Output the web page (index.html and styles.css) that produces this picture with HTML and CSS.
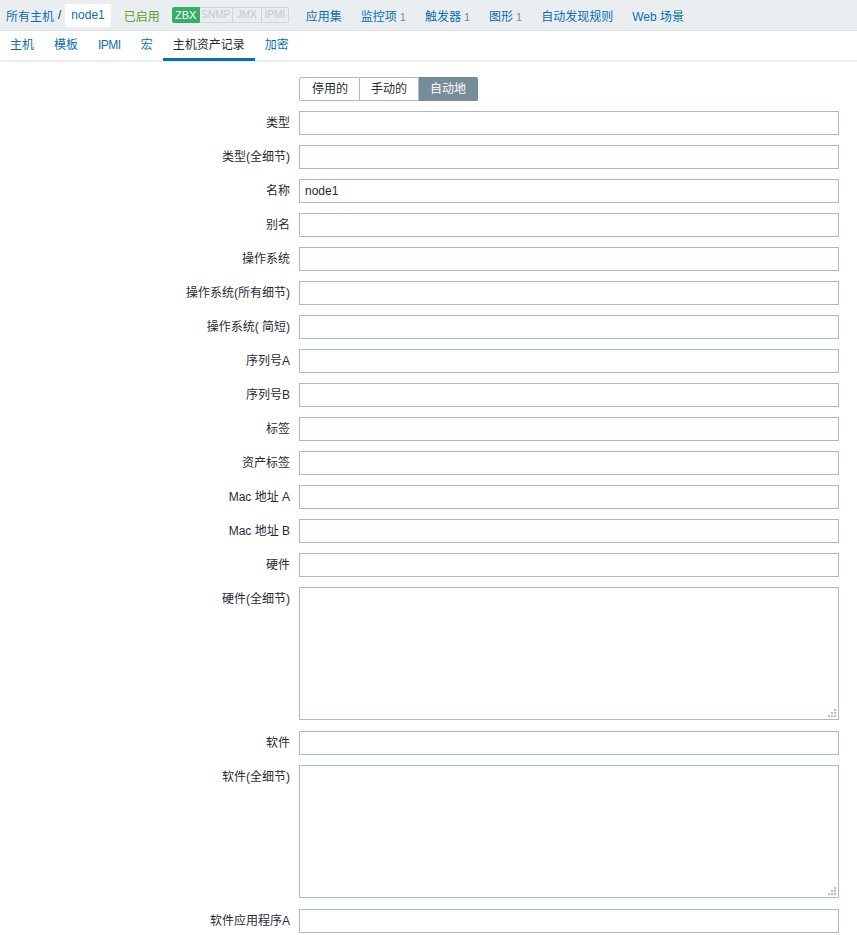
FILE: index.html
```html
<!DOCTYPE html>
<html lang="zh">
<head>
<meta charset="utf-8">
<link rel="stylesheet" href="styles.css">
</head>
<body>
<div class="topbar">
  <a class="lnk crumb">所有主机</a>
  <span class="sep">/</span>
  <span class="host">node1</span>
  <span class="status">已启用</span>
  <span class="badges"><span class="b on w1">ZBX</span><span class="b w2">SNMP</span><span class="b w3">JMX</span><span class="b w4">IPMI</span></span>
  <a class="lnk item first">应用集</a>
  <a class="lnk item">监控项<span class="cnt">1</span></a>
  <a class="lnk item">触发器<span class="cnt">1</span></a>
  <a class="lnk item">图形<span class="cnt">1</span></a>
  <a class="lnk item">自动发现规则</a>
  <a class="lnk item">Web 场景</a>
</div>
<div class="tabs">
  <a class="tab">主机</a>
  <a class="tab">模板</a>
  <a class="tab narrow">IPMI</a>
  <a class="tab">宏</a>
  <a class="tab active">主机资产记录</a>
  <a class="tab">加密</a>
</div>
<div class="form">
  <div class="lbl"></div>
  <div class="seg"><span class="sb">停用的</span><span class="sb">手动的</span><span class="sb sel">自动地</span></div>

  <div class="lbl">类型</div><input class="inp" type="text">
  <div class="lbl">类型(全细节)</div><input class="inp" type="text">
  <div class="lbl">名称</div><input class="inp" type="text" value="node1">
  <div class="lbl">别名</div><input class="inp" type="text">
  <div class="lbl">操作系统</div><input class="inp" type="text">
  <div class="lbl">操作系统(所有细节)</div><input class="inp" type="text">
  <div class="lbl">操作系统( 简短)</div><input class="inp" type="text">
  <div class="lbl">序列号A</div><input class="inp" type="text">
  <div class="lbl">序列号B</div><input class="inp" type="text">
  <div class="lbl">标签</div><input class="inp" type="text">
  <div class="lbl">资产标签</div><input class="inp" type="text">
  <div class="lbl">Mac 地址 A</div><input class="inp" type="text">
  <div class="lbl">Mac 地址 B</div><input class="inp" type="text">
  <div class="lbl">硬件</div><input class="inp" type="text">
  <div class="lbl">硬件(全细节)</div>
  <div class="taw"><textarea class="ta"></textarea><svg class="grip" width="8" height="8" viewBox="0 0 8 8"><rect x="6" y="0" width="2" height="2"/><rect x="3" y="3" width="2" height="2"/><rect x="6" y="3" width="2" height="2"/><rect x="0" y="6" width="2" height="2"/><rect x="3" y="6" width="2" height="2"/><rect x="6" y="6" width="2" height="2"/></svg></div>
  <div class="lbl">软件</div><input class="inp" type="text">
  <div class="lbl">软件(全细节)</div>
  <div class="taw"><textarea class="ta"></textarea><svg class="grip" width="8" height="8" viewBox="0 0 8 8"><rect x="6" y="0" width="2" height="2"/><rect x="3" y="3" width="2" height="2"/><rect x="6" y="3" width="2" height="2"/><rect x="0" y="6" width="2" height="2"/><rect x="3" y="6" width="2" height="2"/><rect x="6" y="6" width="2" height="2"/></svg></div>
  <div class="lbl">软件应用程序A</div><input class="inp" type="text">
</div>
</body>
</html>
```
FILE: styles.css
```css
html, body {
  margin: 0;
  padding: 0;
  background: #ffffff;
  font-family: "Liberation Sans", Arial, "Noto Sans CJK SC", sans-serif;
  font-size: 12px;
  color: #1f2c33;
}
.topbar {
  height: 30px;
  background: #ebeef0;
  border-bottom: 1px solid #dfe4e7;
  display: flex;
  align-items: center;
  padding-left: 6px;
  white-space: nowrap;
}
.lnk { color: #0a6eb4; text-decoration: none; }
.sep { margin: 0 4px 0 4px; color: #1f2c33; }
.host {
  display: inline-flex;
  align-items: center;
  background: #fff;
  height: 23px;
  padding: 0 6px;
  color: #0a6eb4;
  border-radius: 2px;
}
.status { color: #59a02d; margin-left: 13px; }
.badges { display: flex; margin-left: 12px; }
.b {
  box-sizing: border-box;
  font-size: 10px;
  color: #c2c9cc;
  border: 1px solid #cfd6d9;
  border-left: none;
  height: 16px;
  line-height: 14px;
  text-align: center;
  overflow: hidden;
}
.w1 { width: 28px; }
.w2 { width: 33px; }
.w3 { width: 29px; }
.w4 { width: 27px; }
.b.on {
  font-size: 11px;
  background: #34af67;
  color: #fff;
  border: 1px solid #34af67;
  border-radius: 2px 0 0 2px;
}
.b:last-child { border-radius: 0 2px 2px 0; }
.item { margin-left: 19px; }
.item.first { margin-left: 17px; }
.cnt { color: #768d99; margin-left: 3px; font-size: 11px; }
.tabs {
  height: 29px;
  display: flex;
  border-bottom: 2px solid #ebeef0;
}
.tab {
  color: #0a6eb4;
  padding: 0 10px;
  line-height: 29px;
  height: 28px;
}
.tab.narrow { letter-spacing: -0.5px; }
.tab.active {
  color: #1f2c33;
  border-bottom: 3px solid #0a6eb4;
  height: 27px;
  margin-bottom: -2px;
}
.form {
  display: grid;
  grid-template-columns: 290px 540px;
  column-gap: 9px;
  row-gap: 10px;
  padding-top: 15px;
}
.lbl {
  text-align: right;
  line-height: 24px;
  height: 24px;
  white-space: nowrap;
}
.seg { display: flex; height: 24px; }
.sb {
  border: 1px solid #acbbc0;
  border-left: none;
  line-height: 22px;
  padding: 0 11px;
  background: #fff;
}
.sb:first-child { border-left: 1px solid #acbbc0; border-radius: 2px 0 0 2px; padding: 0 11px 0 12px; }
.sb.sel { background: #768d99; border-color: #768d99; color: #fff; border-radius: 0 2px 2px 0; }
.inp, .ta {
  box-sizing: border-box;
  width: 540px;
  border: 1px solid #acbbc0;
  margin: 0;
  padding: 0 5px;
  font-family: "Liberation Sans", Arial, sans-serif;
  font-size: 12px;
  color: #1f2c33;
  background: #fff;
  outline: none;
}
.inp { height: 24px; }
.taw {
  position: relative;
  width: 540px;
  height: 133px;
  margin-bottom: 1px;
}
.ta {
  display: block;
  height: 133px;
  resize: none;
  padding: 4px 5px;
}
.grip {
  position: absolute;
  right: 3px;
  bottom: 3px;
  fill: #b3bec3;
}
```
